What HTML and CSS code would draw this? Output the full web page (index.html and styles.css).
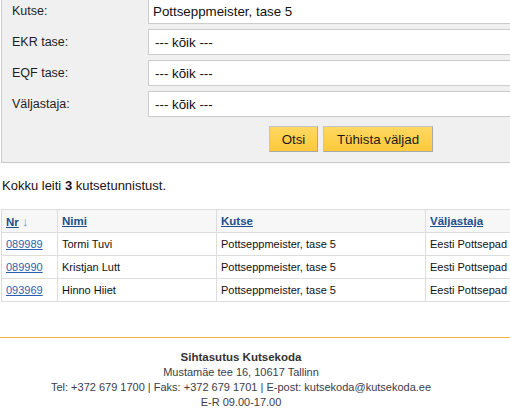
FILE: index.html
```html
<!DOCTYPE html>
<html lang="et">
<head>
<meta charset="utf-8">
<title>Kutsetunnistused</title>
<link rel="stylesheet" href="styles.css">
</head>
<body>
<div class="page">
  <form class="search">
    <div class="row">
      <label class="lbl">Kutse:</label>
      <input class="field" type="text" value="Pottseppmeister, tase 5">
    </div>
    <div class="row">
      <label class="lbl">EKR tase:</label>
      <select class="field sel"><option>--- kõik ---</option></select>
    </div>
    <div class="row">
      <label class="lbl">EQF tase:</label>
      <select class="field sel"><option>--- kõik ---</option></select>
    </div>
    <div class="row">
      <label class="lbl">Väljastaja:</label>
      <select class="field sel"><option>--- kõik ---</option></select>
    </div>
    <div class="actions">
      <button type="button" class="btn btn-search">Otsi</button>
      <button type="button" class="btn btn-clear">Tühista väljad</button>
    </div>
  </form>

  <p class="summary">Kokku leiti <b>3</b> kutsetunnistust.</p>

  <table class="results">
    <colgroup>
      <col class="c-nr"><col class="c-name"><col class="c-kutse"><col class="c-issuer">
    </colgroup>
    <thead>
      <tr>
        <th><a href="#">Nr</a> <span class="arrow">↓</span></th>
        <th><a href="#">Nimi</a></th>
        <th><a href="#">Kutse</a></th>
        <th><a href="#">Väljastaja</a></th>
      </tr>
    </thead>
    <tbody>
      <tr><td><a href="#">089989</a></td><td>Tormi Tuvi</td><td>Pottseppmeister, tase 5</td><td>Eesti Pottsepad</td></tr>
      <tr><td><a href="#">089990</a></td><td>Kristjan Lutt</td><td>Pottseppmeister, tase 5</td><td>Eesti Pottsepad</td></tr>
      <tr><td><a href="#">093969</a></td><td>Hinno Hiiet</td><td>Pottseppmeister, tase 5</td><td>Eesti Pottsepad</td></tr>
    </tbody>
  </table>

  <footer class="footer">
    <div class="footer-inner">
      <div class="org">Sihtasutus Kutsekoda</div>
      <div>Mustamäe tee 16, 10617 Tallinn</div>
      <div>Tel: +372 679 1700 | Faks: +372 679 1701 | E-post: kutsekoda@kutsekoda.ee</div>
      <div>E-R 09.00-17.00</div>
    </div>
  </footer>
</div>
</body>
</html>
```
FILE: styles.css
```css
html, body {
  margin: 0;
  padding: 0;
  background: #ffffff;
  overflow: hidden;
}
body {
  font-family: "Liberation Sans", Arial, sans-serif;
  color: #222222;
}
.page {
  width: 510px;
  height: 415px;
  overflow: hidden;
}
.search {
  width: 600px;
  margin: -3px 0 0 1px;
  padding: 1px 0 10px 0;
  background: #f0f0f0;
  border-left: 1px solid #cccccc;
  border-bottom: 1px solid #c8c8c8;
  display: flex;
  flex-direction: column;
  gap: 5px;
}
.row {
  display: flex;
  align-items: center;
  height: 26px;
}
.lbl {
  box-sizing: border-box;
  width: 146px;
  padding-left: 10px;
  font-size: 12.5px;
  color: #1e1e1e;
}
.field {
  box-sizing: border-box;
  width: 420px;
  height: 26px;
  margin: 0;
  border: 1px solid #cccccc;
  border-radius: 0;
  background: #ffffff;
  padding: 0 4px;
  font-family: "Liberation Sans", Arial, sans-serif;
  font-size: 13.33px;
  color: #111111;
  outline: none;
}
.sel {
  appearance: none;
  -webkit-appearance: none;
  padding-left: 6px;
}
.actions {
  display: flex;
  gap: 5px;
  margin-top: 4px;
  padding-left: 267px;
}
.btn {
  box-sizing: border-box;
  height: 26px;
  margin: 0;
  padding: 0;
  border: 1px solid #c4c4c4;
  border-right-color: #a9a9a9;
  border-bottom-color: #a9a9a9;
  border-radius: 0;
  background: linear-gradient(#ffd862, #ffc93a);
  font-family: "Liberation Sans", Arial, sans-serif;
  font-size: 13.33px;
  color: #1a1a1a;
}
.btn-search { width: 49px; }
.btn-clear { width: 110px; }

.summary {
  margin: 15px 0 15px 2px;
  font-size: 13px;
  line-height: 16px;
  color: #221111;
}
.summary b { font-weight: bold; }

.results {
  width: 560px;
  margin-left: 1px;
  border-collapse: collapse;
  table-layout: fixed;
  font-size: 11px;
}
.c-nr { width: 56px; }
.c-name { width: 159px; }
.c-kutse { width: 209px; }
.c-issuer { width: 136px; }
.results th,
.results td {
  height: 22px;
  padding: 0 4px;
  border: 1px solid #dddddd;
  text-align: left;
  vertical-align: middle;
  white-space: nowrap;
  overflow: hidden;
}
.results th {
  background: #f7f7f7;
  font-size: 11.5px;
  font-weight: bold;
}
.results td { color: #111111; }
.results a {
  color: #1d4f8e;
  text-decoration: underline;
}
.results td a { color: #2a5fb0; }
.arrow {
  color: #7a96c2;
  font-weight: normal;
  font-size: 13px;
}

.footer {
  margin-top: 35px;
  border-top: 1px solid #efb23a;
  padding-top: 12px;
}
.footer-inner {
  width: 482px;
  text-align: center;
  font-size: 11px;
  line-height: 15px;
  color: #3c3c4a;
}
.org {
  font-weight: bold;
  font-size: 11.5px;
  color: #333333;
}
```
